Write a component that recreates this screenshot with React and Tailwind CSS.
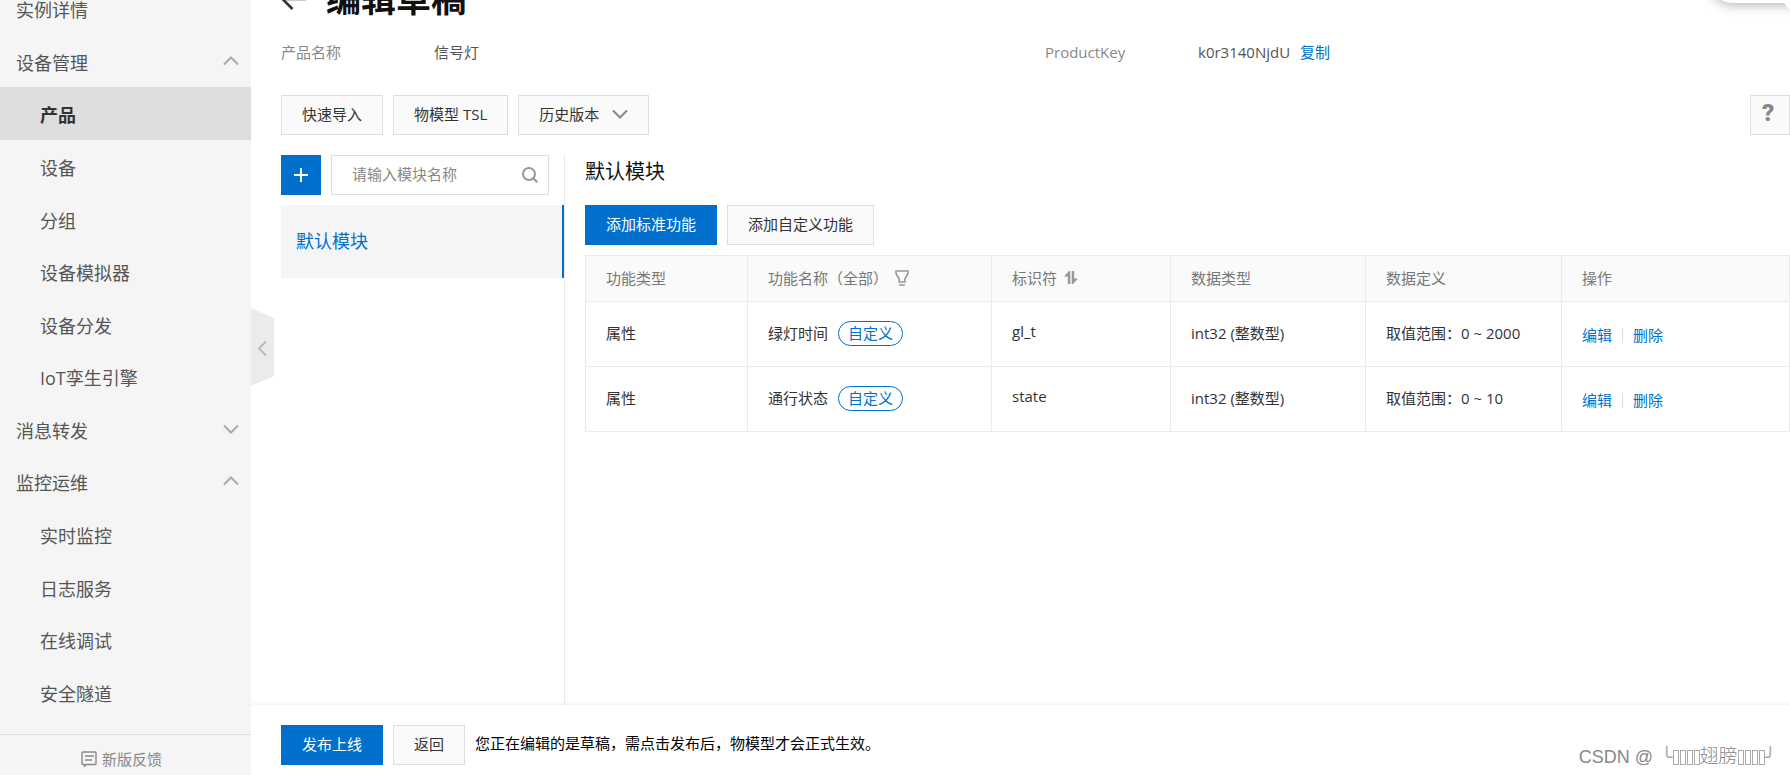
import React from "react";

const menu = [
  { label: "实例详情" },
  { label: "设备管理", arrow: "up" },
  { label: "产品", sub: true, active: true },
  { label: "设备", sub: true },
  { label: "分组", sub: true },
  { label: "设备模拟器", sub: true },
  { label: "设备分发", sub: true },
  { label: "IoT孪生引擎", sub: true },
  { label: "消息转发", arrow: "down" },
  { label: "监控运维", arrow: "up" },
  { label: "实时监控", sub: true },
  { label: "日志服务", sub: true },
  { label: "在线调试", sub: true },
  { label: "安全隧道", sub: true }
];

const features = [
  { type: "属性", name: "绿灯时间", id: "gl_t", dataType: "int32 (整数型)", range: "取值范围：0 ~ 2000" },
  { type: "属性", name: "通行状态", id: "state", dataType: "int32 (整数型)", range: "取值范围：0 ~ 10" }
];

const Chevron = ({ up, className }) => (
  <svg className={className} width="16" height="10" viewBox="0 0 16 10" fill="none" stroke="currentColor" strokeWidth="2">
    <path d={up ? "M1 8.500 8 1.500l7 7" : "M1 1.500l7 7 7-7"} />
  </svg>
);

const Button = ({ primary, children }) => (
  <button
    type="button"
    className={
      primary
        ? "flex h-10 items-center whitespace-nowrap border border-[#0070cc] bg-[#0070cc] px-5 pb-[2px] text-white"
        : "flex h-10 items-center whitespace-nowrap border border-[#dedede] bg-[#fafafa] px-5 pb-[2px] text-[#333]"
    }
  >
    {children}
  </button>
);

const Sidebar = () => (
  <aside className="relative flex w-[251px] shrink-0 flex-col bg-[#f5f5f5] text-[18px] leading-5 text-[#555]">
    <nav className="-mt-[18px] flex flex-1 flex-col pb-4">
      {menu.map((item) => (
        <a
          key={item.label}
          href="#"
          className={
            "flex flex-1 items-center justify-between pr-3 " +
            (item.sub ? "pl-10 " : "pl-4 ") +
            (item.active ? "bg-[#dedede] font-bold text-[#333]" : "")
          }
        >
          <span className="pt-1">{item.label}</span>
          {item.arrow && <Chevron up={item.arrow === "up"} className="text-[#aaa]" />}
        </a>
      ))}
    </nav>
    <a href="#" className="flex h-[41px] shrink-0 items-center justify-center gap-[5px] border-t border-[#dedede] pt-2 pr-2 text-[15px] text-[#888]">
      <svg width="16" height="16" viewBox="0 0 16 16" fill="none" stroke="currentColor" strokeWidth="1.400">
        <path d="M2 1h12a1 1 0 0 1 1 1v10.500a1 1 0 0 1-1 1H5.500L3.500 15v-1.500H2a1 1 0 0 1-1-1V2a1 1 0 0 1 1-1ZM4 5h9M4 9h7" />
      </svg>
      新版反馈
    </a>
    <button type="button" aria-label="收起菜单" className="absolute top-[308px] left-full h-[78px] w-[23px] text-[#bbb]">
      <svg width="23" height="78" viewBox="0 0 23 78" fill="none">
        <path d="M0 0 23 10v58L0 78Z" fill="#ebebeb" />
        <path d="M15 33.500 8 40.500l7 7" stroke="currentColor" strokeWidth="2" />
      </svg>
    </button>
  </aside>
);

const ModuleList = () => (
  <div className="w-[284px] shrink-0 border-r border-[#ebebeb]">
    <div className="flex gap-[10px] pr-[15px]">
      <button type="button" aria-label="新增模块" className="flex size-10 shrink-0 items-center justify-center bg-[#0070cc] text-white">
        <svg width="14" height="14" viewBox="0 0 14 14" stroke="currentColor" strokeWidth="2">
          <path d="M7 0v14M0 7h14" />
        </svg>
      </button>
      <label className="flex h-10 min-w-0 flex-1 items-center border border-[#dedede] pr-[10px] pl-5">
        <input
          type="text"
          aria-label="模块名称"
          placeholder="请输入模块名称"
          className="w-full min-w-0 pb-[2px] outline-none placeholder:text-[#888]"
        />
        <svg className="shrink-0 text-[#999]" width="16" height="16" viewBox="0 0 16 16" fill="none" stroke="currentColor" strokeWidth="2">
          <circle cx="7" cy="7" r="6" />
          <path d="m11.300 11.300 4 4" />
        </svg>
      </label>
    </div>
    <a href="#" className="mt-[10px] flex h-[73px] items-center border-r-2 border-[#0070cc] bg-[#f5f5f5] pb-[2px] pl-[15px] text-[18px] text-[#0070cc]">
      默认模块
    </a>
  </div>
);

const FeatureTable = () => (
  <table className="mt-[10px] w-full table-fixed border-collapse border border-[#ebebeb] text-left text-[#333]">
    <colgroup>
      <col className="w-[162px]" />
      <col className="w-[244px]" />
      <col className="w-[179px]" />
      <col className="w-[195px]" />
      <col className="w-[196px]" />
      <col />
    </colgroup>
    <thead>
      <tr className="h-[46px] bg-[#fafafa] text-[#777] [&>th]:border [&>th]:border-[#ebebeb] [&>th]:px-5 [&>th]:pb-[2px] [&>th]:font-normal">
        <th>功能类型</th>
        <th>
          <div className="flex items-center gap-[7px]">
            功能名称（全部）
            <svg width="14" height="16" viewBox="0 0 14 16" fill="none" stroke="#999" strokeWidth="1.600">
              <path d="M1 1h12v2.500L9.800 9v3H4.200V9L1 3.500ZM4 15h6" />
            </svg>
          </div>
        </th>
        <th>
          <div className="flex items-center gap-[7px]">
            标识符
            <svg width="14" height="13" viewBox="0 0 14 13" fill="#999">
              <path d="M6.300 0v13H3.800V5.500H0L5 0ZM7.700 0v13H9l5-5.500h-3.800V0Z" />
            </svg>
          </div>
        </th>
        <th>数据类型</th>
        <th>数据定义</th>
        <th>操作</th>
      </tr>
    </thead>
    <tbody>
      {features.map((row) => (
        <tr key={row.id} className="h-[65px] [&>td]:border [&>td]:border-[#ebebeb] [&>td]:px-5 [&>td]:pb-[2px]">
          <td>{row.type}</td>
          <td>
            <div className="flex items-center gap-[10px]">
              {row.name}
              <span className="flex h-[25px] items-center rounded-full border border-[#0070cc] px-[9px] text-[#0070cc]">自定义</span>
            </div>
          </td>
          <td>
            <span className="block pb-1">{row.id}</span>
          </td>
          <td>{row.dataType}</td>
          <td>{row.range}</td>
          <td>
            <div className="flex items-center gap-[10px] pt-1 text-[#0070cc]">
              <a href="#">编辑</a>
              <span className="h-[15px] w-px bg-[#dedede]" />
              <a href="#">删除</a>
            </div>
          </td>
        </tr>
      ))}
    </tbody>
  </table>
);

// characters of the nickname that no font has a glyph for
const MissingGlyphs = ({ count }) => (
  <span className="flex gap-px">
    {Array.from({ length: count }, (_, n) => (
      <span key={n} className="h-[15px] w-[6px] border border-[#aaa]" />
    ))}
  </span>
);

const App = () => {
  return (
    <div className="relative flex h-screen overflow-hidden bg-white font-['Open_Sans','Noto_Sans_CJK_SC',sans-serif] text-[15px] leading-[22px]">
      <Sidebar />

      <main className="flex min-w-0 flex-1 flex-col">
        <div className="flex min-h-0 flex-1 flex-col pl-[30px]">
          <header className="-mt-6 flex h-[46px] shrink-0 items-center gap-5 text-[#111]">
            <a href="#" aria-label="返回上一页">
              <svg width="25" height="22" viewBox="0 0 25 22" fill="none" stroke="#333" strokeWidth="2.600">
                <path d="M11.500 1 1.500 11l10 10M2 11h23" />
              </svg>
            </a>
            <h1 className="text-[35px] leading-[46px] font-bold">编辑草稿</h1>
          </header>

          <dl className="mt-[19px] grid shrink-0 grid-cols-[764fr_745fr] text-[#555]">
            <div className="flex">
              <dt className="w-[153px] text-[#888]">产品名称</dt>
              <dd>信号灯</dd>
            </div>
            <div className="flex">
              <dt className="w-[153px] text-[#888]">ProductKey</dt>
              <dd className="flex gap-[10px]">
                k0r3140NjdU
                <a href="#" className="text-[#0070cc]">复制</a>
              </dd>
            </div>
          </dl>

          <div className="mt-8 flex shrink-0 gap-[10px]">
            <Button>快速导入</Button>
            <Button>物模型 TSL</Button>
            <Button>
              历史版本
              <Chevron className="ml-[13px] text-[#888]" />
            </Button>
            <button type="button" className="ml-auto size-10 border border-[#dedede] bg-[#fafafa] pr-1 pb-1 font-['Roboto',sans-serif] text-[24px] font-black text-[#888]">
              ?
            </button>
          </div>

          <div className="mt-5 flex min-h-0 flex-1">
            <ModuleList />
            <section className="min-w-0 flex-1 pl-5">
              <h2 className="text-[20px] leading-[34px] text-[#111]">默认模块</h2>
              <div className="mt-4 flex gap-[10px]">
                <Button primary>添加标准功能</Button>
                <Button>添加自定义功能</Button>
              </div>
              <FeatureTable />
            </section>
          </div>
        </div>

        <footer className="flex h-[70px] shrink-0 items-center gap-[10px] bg-white pt-[10px] pl-[30px] text-black shadow-[0_0_5px_rgba(0,0,0,0.1)]">
          <Button primary>发布上线</Button>
          <Button>返回</Button>
          <p className="pb-1">您正在编辑的是草稿，需点击发布后，物模型才会正式生效。</p>
        </footer>
      </main>

      {/* floating toolbar, scrolled almost out of view */}
      <div className="absolute -top-[37px] -right-10 h-10 w-[118px] rounded-full bg-white shadow-[0_2px_12px_rgba(0,0,0,0.3)]" />
      <div className="absolute -top-[37px] -right-[42px] size-[52px] rounded-full bg-white" />

      <div className="absolute right-[14px] bottom-[6px] flex items-center font-['Liberation_Sans','Noto_Sans_CJK_SC',sans-serif] text-[19px] leading-6 font-light text-[#888]">
        <span className="mr-2 text-[18px]">CSDN @</span>
        <span className="font-['DejaVu_Sans_Mono',monospace] text-[#aaa]">╰</span>
        <MissingGlyphs count={4} />
        翅膀
        <MissingGlyphs count={4} />
        <span className="font-['DejaVu_Sans_Mono',monospace] text-[#aaa]">╯</span>
      </div>
    </div>
  );
};

export default App;
